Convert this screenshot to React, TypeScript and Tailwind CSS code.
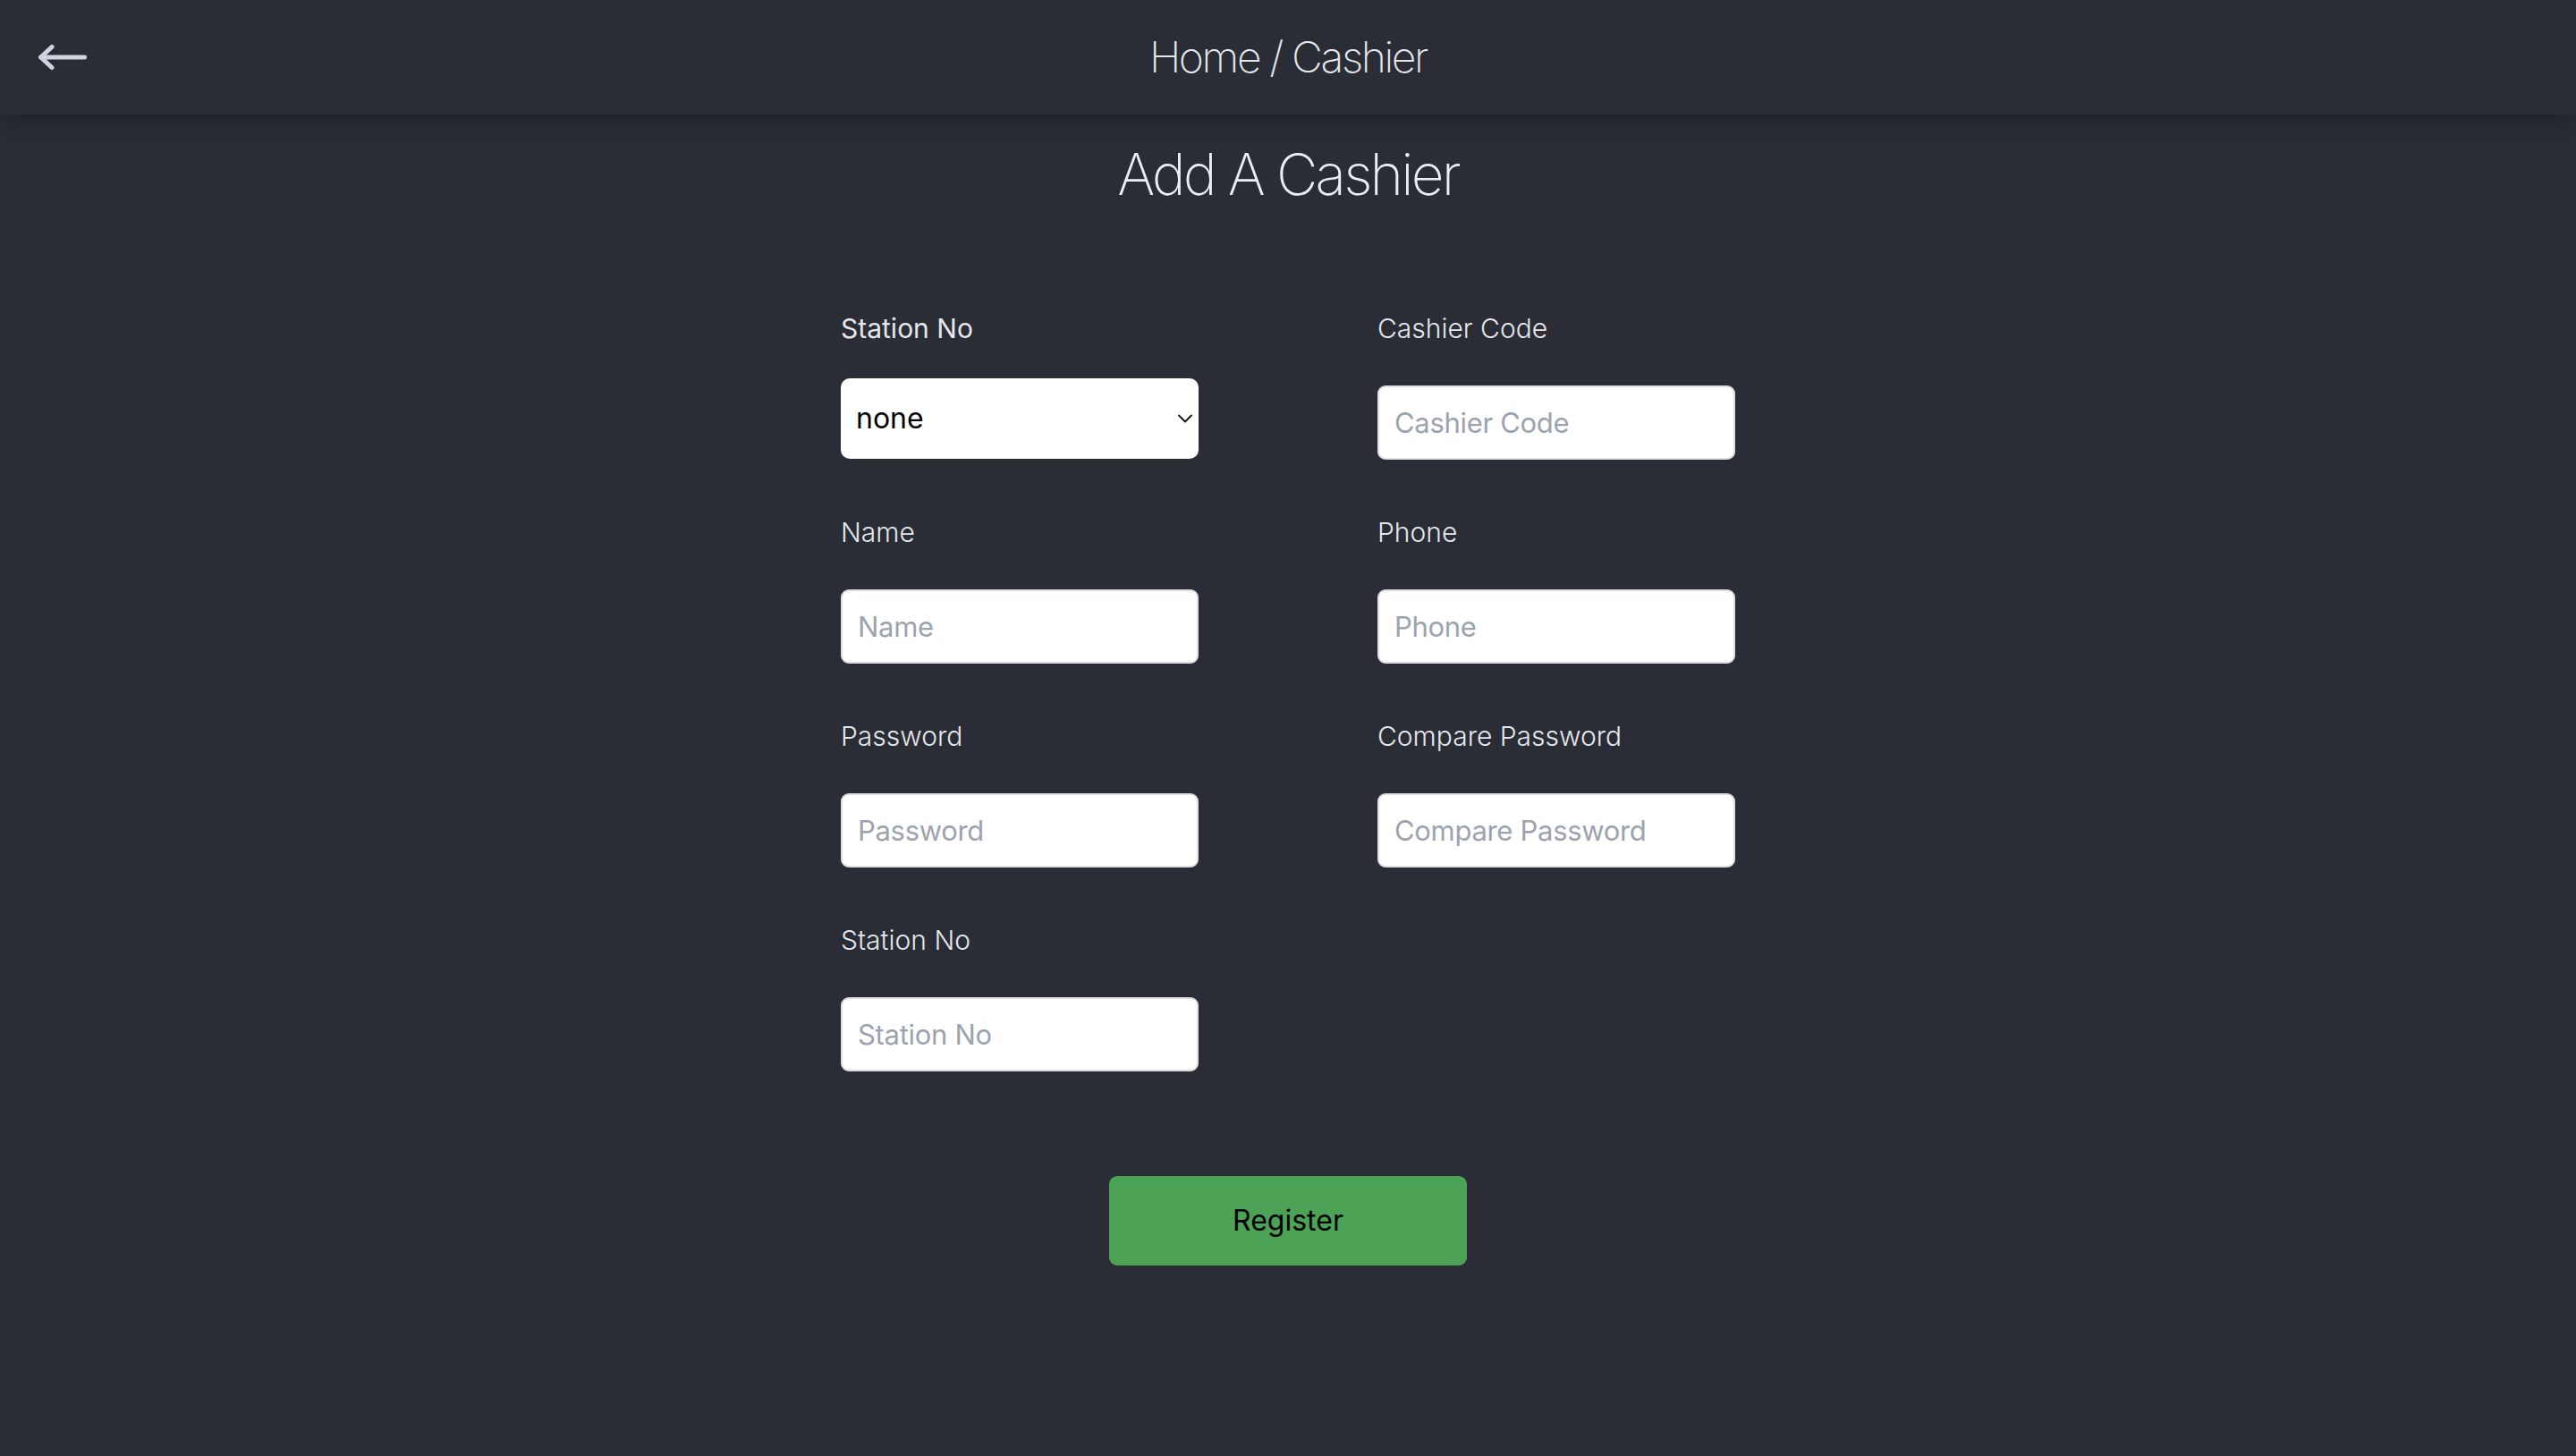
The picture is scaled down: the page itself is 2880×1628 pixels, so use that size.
type Field = {
  label: string;
  placeholder?: string;
  type?: string;
  select?: boolean;
};

const fields: Field[] = [
  { label: "Station No", select: true },
  { label: "Cashier Code", placeholder: "Cashier Code" },
  { label: "Name", placeholder: "Name" },
  { label: "Phone", placeholder: "Phone" },
  { label: "Password", placeholder: "Password", type: "password" },
  { label: "Compare Password", placeholder: "Compare Password", type: "password" },
  { label: "Station No", placeholder: "Station No" },
];

function BackArrow() {
  return (
    <svg width="54" height="30" viewBox="0 0 54 30" fill="none" aria-hidden>
      <path
        d="M2.5 15 H51.5 M15 3.5 L2.5 15 L15 26.5"
        stroke="#cfd5e0"
        strokeWidth="5"
        strokeLinecap="round"
        strokeLinejoin="round"
      />
    </svg>
  );
}

function Chevron() {
  return (
    <svg width="16" height="10" viewBox="0 0 16 10" fill="none" aria-hidden>
      <path d="M1 1.5 L8 8.5 L15 1.5" stroke="#111" strokeWidth="1.8" strokeLinecap="round" strokeLinejoin="round" />
    </svg>
  );
}

function FormField({ field, first }: { field: Field; first: boolean }) {
  return (
    <div className="flex flex-col">
      <label
        className={`text-[30px] leading-[45px] text-[#e5e7eb] ${first ? "font-normal" : "font-light"}`}
      >
        {field.label}
      </label>
      {field.select ? (
        <div className="relative mt-[33px] h-[90px] w-[400px]">
          <select className="h-full w-full appearance-none rounded-[10px] bg-white pl-[17px] text-[32px] text-black outline-none">
            <option>none</option>
          </select>
          <span className="pointer-events-none absolute right-[7px] top-1/2 flex -translate-y-1/2">
            <Chevron />
          </span>
        </div>
      ) : (
        <input
          type={field.type ?? "text"}
          placeholder={field.placeholder}
          className="mt-[41px] h-[83px] w-[400px] rounded-[9px] border-2 border-[#dedede] bg-white pl-[17px] text-[31px] tracking-[-0.01em] text-black outline-none placeholder:text-[#9ca3af]"
        />
      )}
    </div>
  );
}

export default function App() {
  return (
    <div className="min-h-screen bg-[#2a2d35] font-['Inter','Noto_Sans',sans-serif]">
      <header className="relative z-10 grid h-[128px] grid-cols-[1fr_auto_1fr] items-center bg-[#2a2d36] shadow-[0_6px_22px_rgba(0,0,0,0.28)]">
        <button className="ml-[43px] flex w-fit items-center">
          <BackArrow />
        </button>
        <h1 className="text-[48px] font-extralight tracking-[-0.05em] text-[#e5e7eb]">
          Home / Cashier
        </h1>
        <div />
      </header>

      <main className="flex flex-col items-center">
        <h2 className="mt-[35px] text-[64px] font-extralight leading-none tracking-[-0.045em] text-[#eceef2]">
          Add A Cashier
        </h2>

        <form className="mt-[118px] flex flex-col items-center">
          <div className="grid grid-cols-[400px_400px] gap-x-[200px] gap-y-[59px]">
            {fields.map((field, i) => (
              <FormField key={field.label + i} field={field} first={i === 0} />
            ))}
          </div>

          <button
            type="button"
            className="mt-[117px] h-[100px] w-[400px] rounded-[9px] bg-[#4ca355] text-[32px] text-black"
          >
            Register
          </button>
        </form>
      </main>
    </div>
  );
}
